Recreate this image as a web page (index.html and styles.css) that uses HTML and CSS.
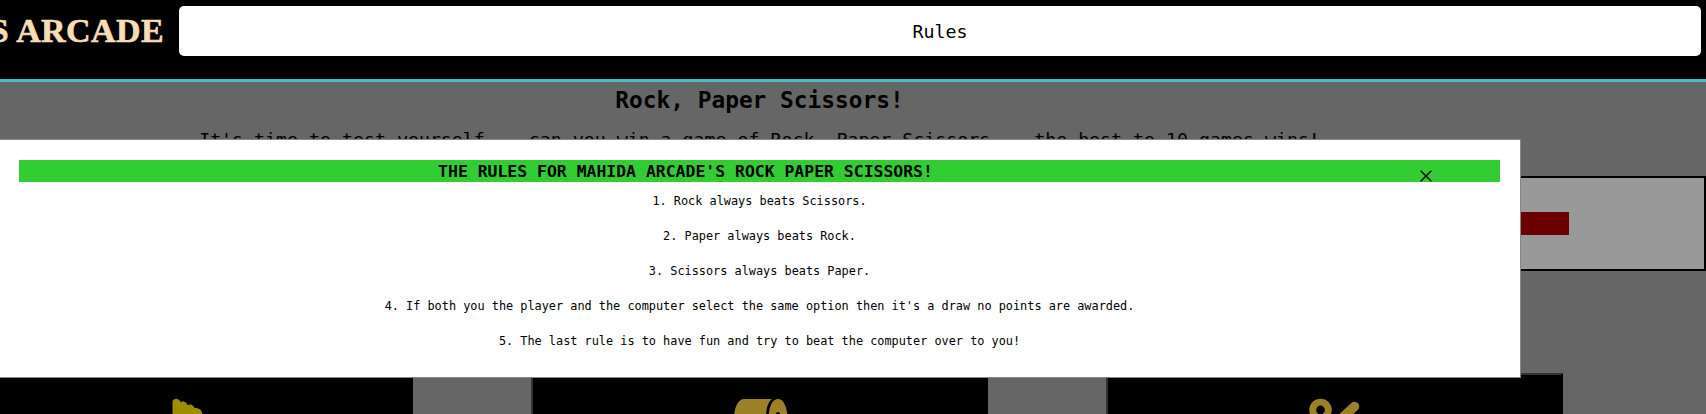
FILE: index.html
```html
<!DOCTYPE html>
<html lang="en">
<head>
<meta charset="utf-8">
<title>Rock, Paper Scissors!</title>
<link rel="stylesheet" href="styles.css">
</head>
<body>
<header class="topbar">
  <div class="logo">MAHIDA'S ARCADE</div>
  <button class="rules-button">Rules</button>
</header>
<main class="game">
  <h1 class="title">Rock, Paper Scissors!</h1>
  <p class="tagline">It's time to test yourself -- can you win a game of Rock, Paper Scissors -- the best to 10 games wins!</p>
  <section class="score"><div class="score-bar"></div></section>
  <section class="choices">
    <button class="choice" aria-label="Rock">
      <svg class="icon rock" viewBox="0 0 60 40"><path d="M13.500 40V19.500l2-2L17.500 20V6.500c0-4.500 6-5 8-.500 3-1.500 6 0 7 3 3-1.500 6 0 7 3 3-.500 7 1 7.500 5V40z"/></svg>
    </button>
    <button class="choice" aria-label="Paper">
      <svg class="icon" viewBox="0 0 60 40"><path fill-rule="evenodd" d="M14 3H42C37 7 36 15 36 23V40H4V23C4 12 8 3 14 3zM48 3C53.500 3 57.500 11 57.500 23V40H38.500V23C38.500 11 42.500 3 48 3zM48 16C46 16 45 19 45 23S46 30 48 30S51 27 51 23S50 16 48 16z"/></svg>
    </button>
    <button class="choice" aria-label="Scissors">
      <svg class="icon" viewBox="0 0 60 40"><path class="stroke" d="M49.500 10.500L25 33"/><circle class="ring" cx="15.500" cy="14" r="7.800"/></svg>
    </button>
  </section>
</main>
<div class="overlay">
  <div class="modal">
    <div class="modal-head"><h2>THE RULES FOR MAHIDA ARCADE'S ROCK PAPER SCISSORS!</h2>
      <svg class="close" viewBox="0 0 12 12"><path d="M.7.7l10.600 10.600M11.300.7L.7 11.300"/></svg></div>
    <p>1. Rock always beats Scissors.</p>
    <p>2. Paper always beats Rock.</p>
    <p>3. Scissors always beats Paper.</p>
    <p>4. If both you the player and the computer select the same option then it's a draw no points are awarded.</p>
    <p>5. The last rule is to have fun and try to beat the computer over to you!</p>
  </div>
</div>
</body>
</html>
```
FILE: styles.css
```css
* { box-sizing: border-box; }
html { height: 414px; overflow: hidden; }
body { margin: 0; width: 1706px; height: 414px; overflow: hidden; background: #666; color: #000; font-family: "DejaVu Sans Mono", monospace; }
.topbar { display: flex; justify-content: flex-end; align-items: flex-start; height: 82px; padding: 6px 5px 0 0; background: #000; border-bottom: 3px solid #3fc4c4; overflow: hidden; }
.logo { flex: none; margin-right: 15px; font: bold 34px/50px "Liberation Serif", serif; letter-spacing: .4px; -webkit-text-stroke: .6px #f5deb3; color: #f5deb3; white-space: nowrap; }
.rules-button { flex: none; width: 1522px; height: 50px; padding: 0; border: 0; border-radius: 5px; background: #fff; color: #000; font: 18.26px/52px "DejaVu Sans Mono", monospace; }
.game { width: 1706px; height: 332px; overflow: hidden; }
.title { margin: 0; padding-top: 3px; height: 46px; width: 1519px; text-align: center; font-size: 22.830px; line-height: 31px; }
.tagline { margin: 0; width: 1519px; height: 48px; text-align: center; font-size: 18.260px; line-height: 24px; white-space: nowrap; }
.score { display: flex; align-items: center; height: 95px; border: 2px solid #000; background: #999; }
.score-bar { width: 1567px; height: 23px; background: #6b0000; }
.choices { display: flex; gap: 118px; height: 41px; margin: 102px 0 0 -44px; overflow: hidden; }
.choice { flex: none; display: flex; justify-content: center; align-items: flex-start; width: 457px; height: 90px; padding: 21px 0 0; border: 2px solid #000; border-top-color: #333; border-left-color: #333; background: #000; }
.icon { width: 60px; height: 40px; fill: #9c8126; }
.icon.rock { fill: #9c8e00; }
.stroke { stroke: #9c8126; stroke-width: 9.500; stroke-linecap: round; fill: none; }
.ring { stroke: #9c8126; stroke-width: 6.800; fill: none; }
.overlay { position: absolute; top: 139px; left: -1px; }
.modal { width: 1522px; height: 239px; padding: 20px 20px 0 19px; border: 1px solid #888; background: #fff; text-align: center; }
.modal-head { display: flex; align-items: center; height: 22px; background: #32cd32; }
.modal-head h2 { flex: none; width: 1333px; margin: 0; font-size: 16.440px; line-height: 22px; padding-top: 2px; }
.close { width: 12px; height: 12px; margin: 10px 0 0 68px; stroke: #000; stroke-width: 1.400; fill: none; }
.modal p { height: 35px; margin: 0; font-size: 11.870px; line-height: 38px; }
```
